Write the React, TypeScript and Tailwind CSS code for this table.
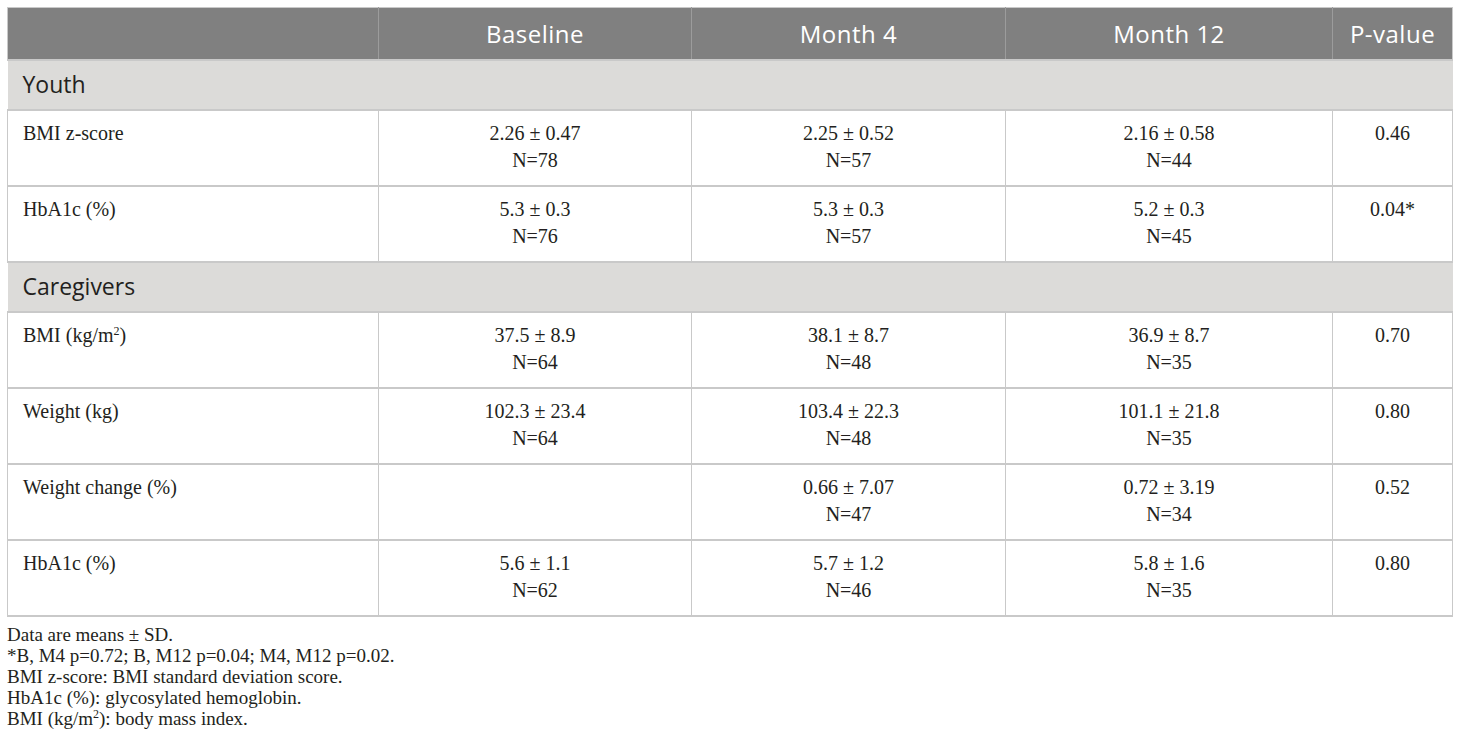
import React from 'react';

type Row = {
  label: React.ReactNode;
  cells: [string, string][];
  p: string;
};

const Sq = () => <sup className="text-[12px] leading-[0] relative -top-[7px] align-baseline">2</sup>;

const youth: Row[] = [
  {
    label: 'BMI z-score',
    cells: [['2.26 ± 0.47', 'N=78'], ['2.25 ± 0.52', 'N=57'], ['2.16 ± 0.58', 'N=44']],
    p: '0.46',
  },
  {
    label: 'HbA1c (%)',
    cells: [['5.3 ± 0.3', 'N=76'], ['5.3 ± 0.3', 'N=57'], ['5.2 ± 0.3', 'N=45']],
    p: '0.04*',
  },
];

const caregivers: Row[] = [
  {
    label: (
      <>
        BMI (kg/m<Sq />)
      </>
    ),
    cells: [['37.5 ± 8.9', 'N=64'], ['38.1 ± 8.7', 'N=48'], ['36.9 ± 8.7', 'N=35']],
    p: '0.70',
  },
  {
    label: 'Weight (kg)',
    cells: [['102.3 ± 23.4', 'N=64'], ['103.4 ± 22.3', 'N=48'], ['101.1 ± 21.8', 'N=35']],
    p: '0.80',
  },
  {
    label: 'Weight change (%)',
    cells: [['', ''], ['0.66 ± 7.07', 'N=47'], ['0.72 ± 3.19', 'N=34']],
    p: '0.52',
  },
  {
    label: 'HbA1c (%)',
    cells: [['5.6 ± 1.1', 'N=62'], ['5.7 ± 1.2', 'N=46'], ['5.8 ± 1.6', 'N=35']],
    p: '0.80',
  },
];

const headers = ['Baseline', 'Month 4', 'Month 12', 'P-value'];

const SectionRow: React.FC<{ title: string }> = ({ title }) => (
  <tr className="h-[50px] bg-[#dcdbd9]">
    <td
      colSpan={5}
      className="border-y-2 border-[#c9c9c9] pl-[15px] text-[23px] text-[#231f20] font-['Open_Sans',sans-serif]"
    >
      {title}
    </td>
  </tr>
);

const DataRow: React.FC<{ row: Row }> = ({ row }) => (
  <tr className="h-[76px] align-top">
    <td className="border-x border-b-2 border-[#c9c9c9] pl-[15px] pt-[9px]">{row.label}</td>
    {row.cells.map(([a, b], i) => (
      <td key={i} className="border-x border-b-2 border-[#c9c9c9] pt-[9px] text-center">
        <div>{a}</div>
        <div>{b}</div>
      </td>
    ))}
    <td className="border-x border-b-2 border-[#c9c9c9] pt-[9px] text-center">{row.p}</td>
  </tr>
);

export default function App() {
  return (
    <div className="bg-white min-h-[751px] pl-[7px] pt-[7px] font-['Liberation_Serif',serif] text-[20px] leading-[27px] text-[#231f20]">
      <table className="table-fixed border-collapse w-[1445px]">
        <colgroup>
          <col className="w-[371px]" />
          <col className="w-[313px]" />
          <col className="w-[314px]" />
          <col className="w-[327px]" />
          <col className="w-[120px]" />
        </colgroup>
        <thead>
          <tr className="h-[52px] bg-[#808080] text-white font-['Open_Sans',sans-serif] text-[24px] tracking-[0.5px]">
            <th className="border border-[#9c9c9c] border-t-[#c9c9c9] border-l-[#c9c9c9] font-normal"></th>
            {headers.map((h, i) => (
              <th
                key={h}
                className={`border border-[#9c9c9c] border-t-[#c9c9c9] font-normal ${
                  i === headers.length - 1 ? 'border-r-[#c9c9c9]' : ''
                }`}
              >
                {h}
              </th>
            ))}
          </tr>
        </thead>
        <tbody>
          <SectionRow title="Youth" />
          {youth.map((r, i) => (
            <DataRow key={i} row={r} />
          ))}
          <SectionRow title="Caregivers" />
          {caregivers.map((r, i) => (
            <DataRow key={i} row={r} />
          ))}
        </tbody>
      </table>
      <div className="mt-[7px] text-[19px] leading-[21px]">
        <p>Data are means ± SD.</p>
        <p>*B, M4 p=0.72; B, M12 p=0.04; M4, M12 p=0.02.</p>
        <p>BMI z-score: BMI standard deviation score.</p>
        <p>HbA1c (%): glycosylated hemoglobin.</p>
        <p>
          BMI (kg/m<Sq />): body mass index.
        </p>
      </div>
    </div>
  );
}
